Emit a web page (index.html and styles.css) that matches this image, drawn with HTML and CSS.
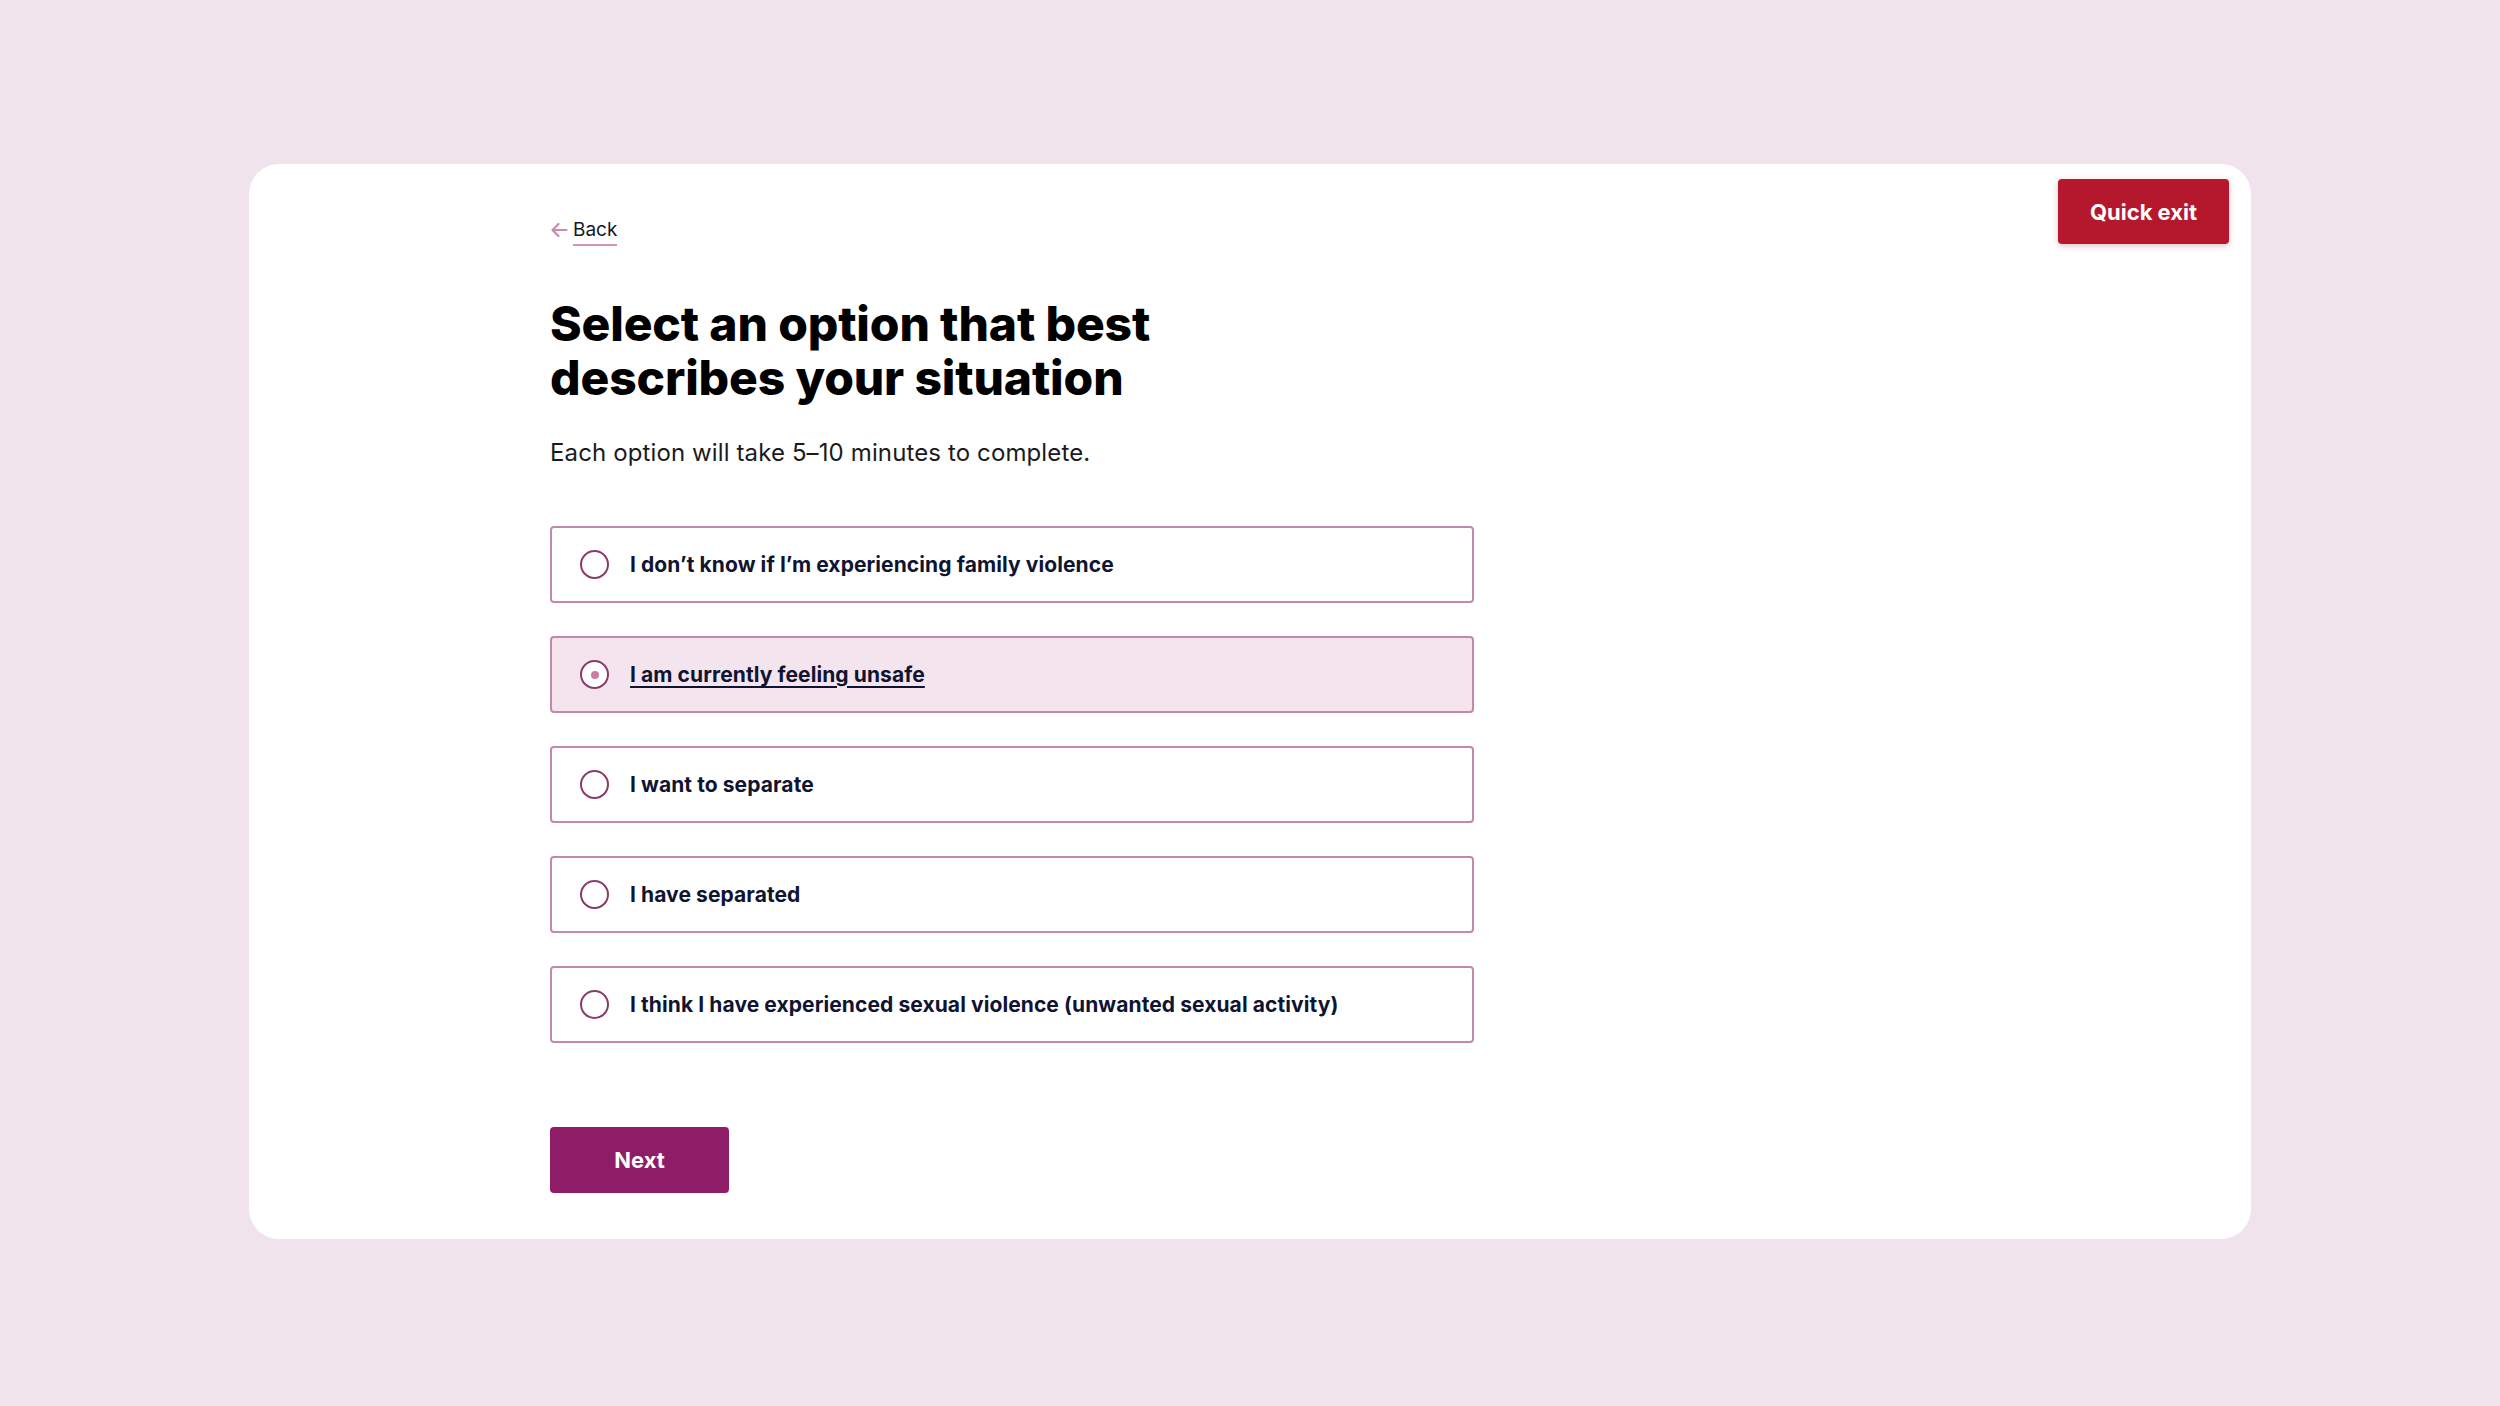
FILE: index.html
```html
<!DOCTYPE html>
<html lang="en">
<head>
  <meta charset="UTF-8" />
  <title>Select an option</title>
  <link rel="stylesheet" href="styles.css">
</head>
<body>
  <div class="page">
    <div class="card">
      <main class="content">
        <a class="back" href="#">
          <svg class="back-arrow" width="18" height="16" viewBox="0 0 18 16" aria-hidden="true">
            <path d="M16.5 8H2.5M8.5 2L2.5 8l6 6" fill="none" stroke="#c98aae" stroke-width="2.2" stroke-linecap="round" stroke-linejoin="round"/>
          </svg>
          <span class="back-label">Back</span>
        </a>

        <h1 class="title">Select an option that best<br>describes your situation</h1>
        <p class="intro">Each option will take 5–10 minutes to complete.</p>

        <form class="options">
          <label class="option">
            <input type="radio" name="situation" value="unsure">
            <span class="radio"></span>
            <span class="option-text">I don’t know if I’m experiencing family violence</span>
          </label>
          <label class="option option--hover">
            <input type="radio" name="situation" value="unsafe">
            <span class="radio"></span>
            <span class="option-text">I am currently feeling unsafe</span>
          </label>
          <label class="option">
            <input type="radio" name="situation" value="want-separate">
            <span class="radio"></span>
            <span class="option-text">I want to separate</span>
          </label>
          <label class="option">
            <input type="radio" name="situation" value="separated">
            <span class="radio"></span>
            <span class="option-text">I have separated</span>
          </label>
          <label class="option">
            <input type="radio" name="situation" value="sexual-violence">
            <span class="radio"></span>
            <span class="option-text">I think I have experienced sexual violence (unwanted sexual activity)</span>
          </label>
        </form>

        <button class="btn btn-next" type="button">Next</button>
      </main>

      <button class="btn btn-exit" type="button">Quick exit</button>
    </div>
  </div>
</body>
</html>
```

FILE: styles.css
```css
body {
  margin: 0;
  background-color: #f0e3eb;
  font-family: Inter, "Liberation Sans", sans-serif;
  color: #111;
}
.page {
  padding: 164px 249px 167px;
}
.card {
  display: flex;
  justify-content: space-between;
  align-items: flex-start;
  background-color: #fff;
  border-radius: 30px;
  min-height: 1075px;
  box-sizing: border-box;
  padding: 15px 22px 46px 301px;
}
.content {
  width: 924px;
  padding-top: 40px;
}

/* back link */
.back {
  display: inline-flex;
  align-items: center;
  gap: 5px;
  color: #111827;
  text-decoration: none;
  font-size: 19px;
}
.back-arrow {
  margin-top: -5px;
}
.back-label {
  border-bottom: 2px solid #cf96b8;
  padding-bottom: 3px;
  line-height: 22px;
}

.title {
  margin: 51px 0 0;
  font-size: 48px;
  line-height: 54px;
  font-weight: 800;
  letter-spacing: -0.003em;
  color: #000;
}
.intro {
  margin: 32px 0 0;
  font-size: 24px;
  line-height: 32px;
  letter-spacing: 0.005em;
  color: #1b1b1b;
}

/* options */
.options {
  display: flex;
  flex-direction: column;
  gap: 33px;
  margin-top: 57px;
}
.option {
  display: flex;
  align-items: center;
  gap: 21px;
  height: 77px;
  box-sizing: border-box;
  padding: 0 28px;
  border: 2.5px solid #c488ac;
  border-radius: 4px;
  background-color: #fff;
  cursor: pointer;
}
.option input {
  display: none;
}
.radio {
  width: 29px;
  height: 29px;
  box-sizing: border-box;
  border: 2px solid #8a3b6b;
  border-radius: 50%;
  background-color: #fff;
  display: flex;
  align-items: center;
  justify-content: center;
  flex-shrink: 0;
}
.option-text {
  font-size: 21px;
  font-weight: 700;
  letter-spacing: 0.004em;
  color: #0f1430;
}
.option--hover {
  background-color: #f4e4ee;
}
.option--hover .radio::after {
  content: "";
  width: 8px;
  height: 8px;
  border-radius: 50%;
  background-color: #c67ea6;
}
.option--hover .option-text {
  text-decoration: underline;
  text-decoration-thickness: 2px;
  text-underline-offset: 4px;
}

/* buttons */
.btn {
  border: none;
  border-radius: 4px;
  color: #fff;
  font-family: inherit;
  font-weight: 700;
  cursor: pointer;
}
.btn-next {
  margin-top: 84px;
  width: 179px;
  height: 66px;
  font-size: 22px;
  background-color: #8e1c67;
}
.btn-exit {
  width: 171px;
  height: 65px;
  font-size: 22px;
  background-color: #b5182d;
  box-shadow: 0 2px 6px rgba(120, 20, 40, 0.25);
}
```
